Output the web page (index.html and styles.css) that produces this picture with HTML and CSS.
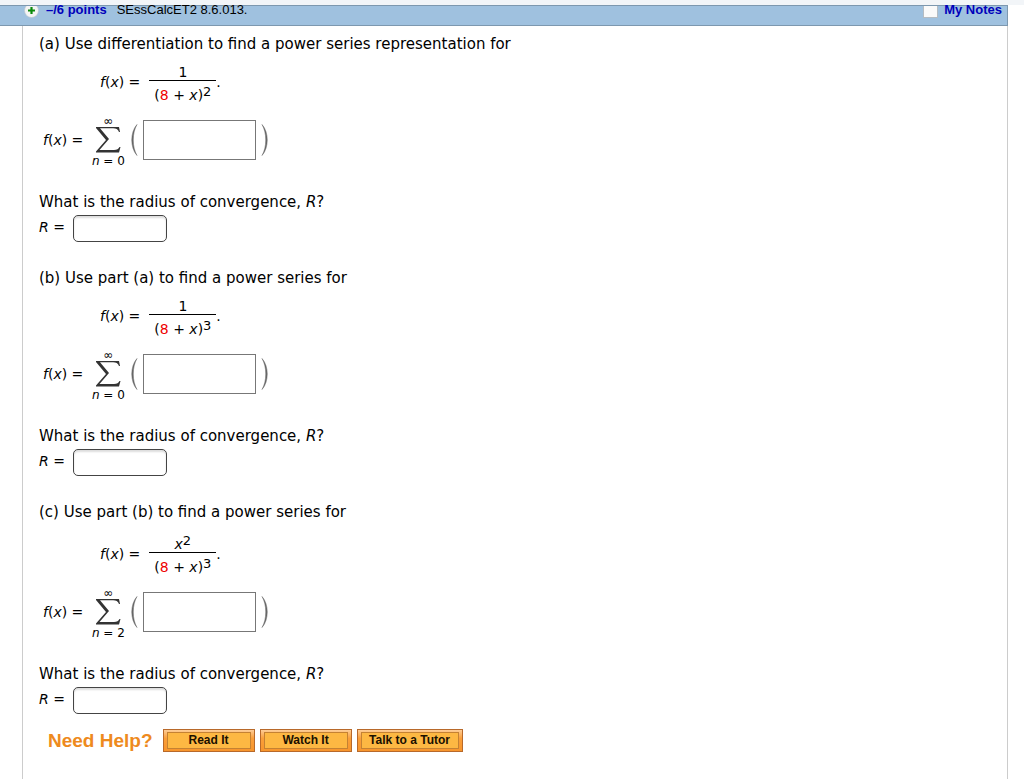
FILE: index.html
```
<!DOCTYPE html>
<html lang="en">
<head>
    <meta charset="UTF-8">
    <meta name="viewport" content="width=device-width, initial-scale=1.0">
    <title>SEssCalcET2 8.6.013.</title>
    <link rel="stylesheet" href="styles.css">
</head>
<body>
    <div class="top-strip"></div>
    <header class="question-bar">
        <svg class="expand-icon" width="15" height="12" viewBox="0 3 15 12">
            <circle cx="7.5" cy="7.5" r="7" fill="#f4f4f4" stroke="#b9c4cc" stroke-width="0.6"/>
            <path d="M7.5 4v7M4 7.5h7" stroke="#0b8a0b" stroke-width="2.2"/>
        </svg>
        <a class="points" href="#">–/6 points</a>
        <span class="source">SEssCalcET2 8.6.013.</span>
        <a class="notes" href="#"><span class="notes-icon"></span>My Notes</a>
    </header>

    <main class="question">
        <section class="part">
            <p class="prompt">(a) Use differentiation to find a power series representation for</p>
            <div class="equation">
                <span class="side"><i>f</i>(<i>x</i>) =</span>
                <span class="fraction">
                    <span class="numerator">1</span>
                    <span class="denominator">(<span class="value">8</span> + <i>x</i>)<sup>2</sup></span>
                </span>
                <span class="side">.</span>
            </div>
            <div class="series">
                <label for="series-a"><i>f</i>(<i>x</i>) =</label>
                <span class="sum">
                    <span class="upper">∞</span>
                    <svg width="26" height="28" viewBox="0 0 26 28">
                        <path d="M1 1H24L25 6H24C23 3 21 2.2 18 2.2H5L14 13L4.5 24H19C22 24 23.5 23 24.5 21H25.5L24 26.5H1V25.5L11 14L1 2Z" fill="#333"/>
                    </svg>
                    <span class="lower"><i>n</i> = 0</span>
                </span>
                <svg class="paren" width="8" height="34" viewBox="0 0 8 34"><path d="M7 1.5C0 9 0 25 7 32.5C2 24 2 10 7 1.5Z" fill="#666" stroke="#666" stroke-width="0.5"/></svg>
                <input class="series-input" id="series-a" type="text">
                <svg class="paren" width="8" height="34" viewBox="0 0 8 34"><path d="M1 1.5C8 9 8 25 1 32.5C6 24 6 10 1 1.5Z" fill="#666" stroke="#666" stroke-width="0.5"/></svg>
            </div>
            <p class="prompt">What is the radius of convergence, <i>R</i>?</p>
            <div class="radius">
                <label for="radius-a"><i>R</i> =</label>
                <input class="radius-input" id="radius-a" type="text">
            </div>
        </section>

        <section class="part">
            <p class="prompt">(b) Use part (a) to find a power series for</p>
            <div class="equation">
                <span class="side"><i>f</i>(<i>x</i>) =</span>
                <span class="fraction">
                    <span class="numerator">1</span>
                    <span class="denominator">(<span class="value">8</span> + <i>x</i>)<sup>3</sup></span>
                </span>
                <span class="side">.</span>
            </div>
            <div class="series">
                <label for="series-b"><i>f</i>(<i>x</i>) =</label>
                <span class="sum">
                    <span class="upper">∞</span>
                    <svg width="26" height="28" viewBox="0 0 26 28">
                        <path d="M1 1H24L25 6H24C23 3 21 2.2 18 2.2H5L14 13L4.5 24H19C22 24 23.5 23 24.5 21H25.5L24 26.5H1V25.5L11 14L1 2Z" fill="#333"/>
                    </svg>
                    <span class="lower"><i>n</i> = 0</span>
                </span>
                <svg class="paren" width="8" height="34" viewBox="0 0 8 34"><path d="M7 1.5C0 9 0 25 7 32.5C2 24 2 10 7 1.5Z" fill="#666" stroke="#666" stroke-width="0.5"/></svg>
                <input class="series-input" id="series-b" type="text">
                <svg class="paren" width="8" height="34" viewBox="0 0 8 34"><path d="M1 1.5C8 9 8 25 1 32.5C6 24 6 10 1 1.5Z" fill="#666" stroke="#666" stroke-width="0.5"/></svg>
            </div>
            <p class="prompt">What is the radius of convergence, <i>R</i>?</p>
            <div class="radius">
                <label for="radius-b"><i>R</i> =</label>
                <input class="radius-input" id="radius-b" type="text">
            </div>
        </section>

        <section class="part">
            <p class="prompt">(c) Use part (b) to find a power series for</p>
            <div class="equation">
                <span class="side"><i>f</i>(<i>x</i>) =</span>
                <span class="fraction">
                    <span class="numerator raised"><i>x</i><sup>2</sup></span>
                    <span class="denominator">(<span class="value">8</span> + <i>x</i>)<sup>3</sup></span>
                </span>
                <span class="side">.</span>
            </div>
            <div class="series">
                <label for="series-c"><i>f</i>(<i>x</i>) =</label>
                <span class="sum">
                    <span class="upper">∞</span>
                    <svg width="26" height="28" viewBox="0 0 26 28">
                        <path d="M1 1H24L25 6H24C23 3 21 2.2 18 2.2H5L14 13L4.5 24H19C22 24 23.5 23 24.5 21H25.5L24 26.5H1V25.5L11 14L1 2Z" fill="#333"/>
                    </svg>
                    <span class="lower"><i>n</i> = 2</span>
                </span>
                <svg class="paren" width="8" height="34" viewBox="0 0 8 34"><path d="M7 1.5C0 9 0 25 7 32.5C2 24 2 10 7 1.5Z" fill="#666" stroke="#666" stroke-width="0.5"/></svg>
                <input class="series-input" id="series-c" type="text">
                <svg class="paren" width="8" height="34" viewBox="0 0 8 34"><path d="M1 1.5C8 9 8 25 1 32.5C6 24 6 10 1 1.5Z" fill="#666" stroke="#666" stroke-width="0.5"/></svg>
            </div>
            <p class="prompt">What is the radius of convergence, <i>R</i>?</p>
            <div class="radius">
                <label for="radius-c"><i>R</i> =</label>
                <input class="radius-input" id="radius-c" type="text">
            </div>
        </section>

        <div class="help">
            <span class="help-title">Need Help?</span>
            <button class="help-btn" type="button"><span>Read It</span></button>
            <button class="help-btn" type="button"><span>Watch It</span></button>
            <button class="help-btn wide" type="button"><span>Talk to a Tutor</span></button>
        </div>
    </main>
</body>
</html>
```
FILE: styles.css
```
* {
    box-sizing: border-box;
}
body {
    margin: 0;
    min-height: 100vh;
    display: flex;
    flex-direction: column;
    background: #fff;
    color: #000;
    font-family: Verdana, "DejaVu Sans", sans-serif;
    font-size: 14px;
    line-height: 20px;
}
svg {
    display: block;
}
.top-strip {
    height: 5px;
    background: #f2f5f8;
}
.question-bar {
    display: flex;
    align-items: flex-start;
    height: 21px;
    margin-right: 16px;
    padding: 0 5px 0 24px;
    background: #9fc1df;
    border: 1px solid #7d98af;
    border-left: 0;
    font-family: Arial, "Liberation Sans", sans-serif;
    font-size: 13px;
    line-height: 8px;
}
.question-bar a {
    color: #0000bb;
    font-weight: bold;
    text-decoration: none;
}
.expand-icon {
    flex: none;
}
.points {
    margin-left: 7px;
}
.source {
    margin-left: 10px;
}
.notes {
    display: flex;
    gap: 6px;
    margin-left: auto;
}
.notes-icon {
    width: 15px;
    height: 12px;
    background: #fafafa;
    border: 1px solid #b5bcc2;
    border-top: 0;
}
.question {
    flex: 1;
    margin: 0 16px 0 22px;
    padding: 8px 16px 0;
    border-left: 1px solid #ccc;
    border-right: 1px solid #ccc;
}
.part {
    margin-bottom: 26px;
}
.prompt {
    margin: 0;
    font-size: 15px;
}
.equation {
    display: flex;
    align-items: flex-end;
    margin: 10px 0 7px 61px;
}
.side {
    padding-bottom: 13px;
}
.fraction {
    width: 67px;
    margin-left: 9px;
    text-align: center;
}
.numerator {
    display: block;
    line-height: 16px;
    border-bottom: 1px solid #000;
}
.raised {
    padding-top: 4px;
}
.denominator {
    display: block;
    padding-top: 4px;
    line-height: 20px;
}
.value {
    color: #e00;
}
sup {
    font-size: 13px;
    line-height: 0;
    vertical-align: 4px;
}
.series {
    display: flex;
    align-items: center;
    height: 56px;
    margin: 0 0 24px 4px;
}
.sum {
    display: flex;
    flex-direction: column;
    align-items: center;
    width: 34px;
    margin-left: 8px;
    padding-top: 4px;
}
.upper {
    font-size: 12px;
    line-height: 10px;
}
.lower {
    font-size: 12px;
    line-height: 14px;
    white-space: nowrap;
}
.paren {
    margin: 0 5px;
}
.series-input {
    width: 113px;
    height: 40px;
    border: 1px solid #777;
    background: #fff;
}
.radius {
    display: flex;
    align-items: flex-start;
    gap: 8px;
    margin-top: 3px;
}
.radius label {
    line-height: 24px;
}
.radius-input {
    width: 94px;
    height: 27px;
    border: 1px solid #444;
    border-radius: 5px;
    background: #fff;
    box-shadow: inset 0 2px 2px #ddd;
}
.help {
    display: flex;
    align-items: center;
    gap: 5px;
    margin: -11px 0 0 9px;
}
.help-title {
    margin-right: 5px;
    color: #ee8a1d;
    font: bold 19px Arial, "Liberation Sans", sans-serif;
}
.help-btn {
    width: 92px;
    height: 23px;
    padding: 2px 3px;
    border: 1px solid #b8692a;
    background: linear-gradient(#fdcc96, #fa9f3a 40%, #f7952c);
    color: #1a1000;
    font: bold 12px Arial, "Liberation Sans", sans-serif;
}
.help-btn span {
    display: block;
    border: 1px solid #c58232;
    background: #fdb843;
    line-height: 15px;
}
.wide {
    width: 106px;
}
```
